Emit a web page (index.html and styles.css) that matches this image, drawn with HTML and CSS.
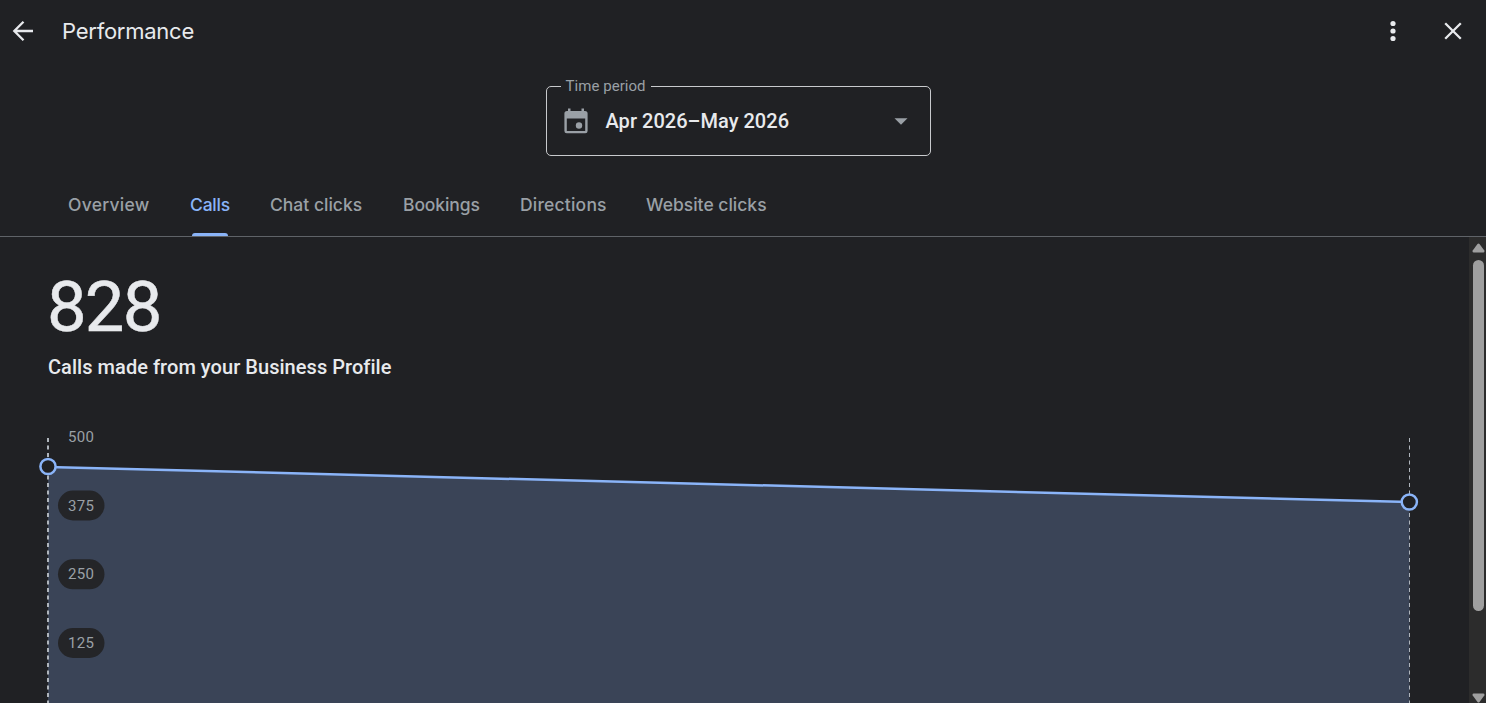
FILE: index.html
```html
<!DOCTYPE html>
<html lang="en">
<head>
    <meta charset="utf-8">
    <title>Performance</title>
    <link rel="stylesheet" href="styles.css">
</head>
<body>
<div class="performance">
    <header class="header">
        <svg class="icon-back" width="22" height="22" viewBox="0 0 22 22">
            <path d="M21 11H2.5M11.5 1.8L2.3 11L11.5 20.2"/>
        </svg>
        <h1 class="title">Performance</h1>
        <svg class="icon-more" width="6" height="22" viewBox="0 0 6 22">
            <circle cx="3" cy="3.5" r="2.6"/>
            <circle cx="3" cy="11" r="2.6"/>
            <circle cx="3" cy="18.5" r="2.6"/>
        </svg>
        <svg class="icon-close" width="18" height="18" viewBox="0 0 18 18">
            <path d="M1.2 1.2L16.8 16.8M16.8 1.2L1.2 16.8"/>
        </svg>
    </header>

    <fieldset class="period">
        <legend class="period-label">Time period</legend>
        <div class="period-value">
            <svg class="icon-calendar" width="24" height="26" viewBox="0 0 24 26">
                <path fill-rule="evenodd" d="M4 0.500h2.500v2.500h11V0.500H20v2.500h1a2.600 2.600 0 0 1 2.600 2.600v17.300a2.300 2.300 0 0 1-2.300 2.300H2.700a2.300 2.300 0 0 1-2.300-2.300V5.600A2.600 2.600 0 0 1 3 3h1zM2.800 10.500v12.500h18.400V10.500z"/>
                <circle cx="15" cy="17.500" r="3.200"/>
            </svg>
            <span class="period-text">Apr 2026–May 2026</span>
            <svg class="icon-arrow" width="14" height="7" viewBox="0 0 14 7">
                <path d="M0.500 0.200h13L7 6.700z"/>
            </svg>
        </div>
    </fieldset>

    <nav class="tabs">
        <div class="tab tab-overview">Overview</div>
        <div class="tab tab-calls active">Calls</div>
        <div class="tab tab-chat">Chat clicks</div>
        <div class="tab tab-bookings">Bookings</div>
        <div class="tab tab-directions">Directions</div>
        <div class="tab tab-website">Website clicks</div>
    </nav>

    <div class="body">
        <main class="content">
            <div class="total">828</div>
            <div class="subtitle">Calls made from your Business Profile</div>
            <svg class="chart" width="1469" height="278" viewBox="0 425 1469 278">
                <path class="area" d="M48 467L1409.500 502V703H48z"/>
                <path class="guide guide-start" d="M48 438V703"/>
                <path class="guide" d="M1409.500 438V703"/>
                <path class="line" d="M48 467L1409.500 502"/>
                <circle class="point" cx="48" cy="466.500" r="7.600"/>
                <circle class="point" cx="1409.300" cy="502" r="7.600"/>
                <rect class="pill" x="58" y="490.500" width="46.500" height="30" rx="15"/>
                <rect class="pill" x="58" y="559.300" width="46.500" height="30" rx="15"/>
                <rect class="pill" x="58" y="628" width="46.500" height="30" rx="15"/>
                <text class="tick" x="68" y="442">500</text>
                <text class="tick" x="68" y="511">375</text>
                <text class="tick" x="68" y="579">250</text>
                <text class="tick" x="68" y="648">125</text>
            </svg>
        </main>
        <div class="scrollbar">
            <svg width="13" height="10" viewBox="0.500 0 13 10"><path d="M6 1Q7 0 8 1L12.800 7.500Q13.500 9.500 12 9.500H2Q0.500 9.500 1.200 7.500z"/></svg>
            <div class="thumb"></div>
            <svg class="scroll-down" width="13" height="10" viewBox="0.500 0 13 10"><path d="M6 9Q7 10 8 9L12.800 2.500Q13.500 0.500 12 0.500H2Q0.500 0.500 1.200 2.500z"/></svg>
        </div>
    </div>
</div>
</body>
</html>
```
FILE: styles.css
```css
* {
    box-sizing: border-box;
}

body {
    margin: 0;
    background-color: #202124;
    color: #e8eaed;
    font-family: Roboto, sans-serif;
    overflow: hidden;
}

.performance {
    display: flex;
    flex-direction: column;
    height: 703px;
}

.header {
    display: flex;
    align-items: center;
    height: 62px;
    padding: 0 24px 0 12px;
}

.icon-back, .icon-close {
    fill: none;
    stroke: #e8eaed;
    stroke-width: 2.3;
}

.icon-more {
    fill: #e8eaed;
    margin-left: auto;
    margin-right: 48px;
}

.title {
    margin: 0 0 0 28px;
    font-family: Inter, sans-serif;
    font-size: 22px;
    font-weight: 400;
    line-height: 28px;
    letter-spacing: -0.25px;
}

.period {
    width: 385px;
    height: 78px;
    margin: 16px 0 0 546px;
    padding: 0 22px 0 17px;
    border: 1px solid #c8cacd;
    border-radius: 5px;
}

.period-label {
    margin-left: -3px;
    padding: 0 5px 0 4.5px;
    color: #9aa0a6;
    font-size: 15px;
    line-height: 16px;
    letter-spacing: 0.05px;
}

.period-value {
    display: flex;
    align-items: center;
    height: 54px;
}

.icon-calendar, .icon-arrow {
    fill: #9aa0a6;
}

.period-text {
    margin-left: 17.5px;
    font-size: 20px;
    font-weight: 500;
    letter-spacing: 0.03px;
}

.icon-arrow {
    margin-left: auto;
}

.tabs {
    display: flex;
    gap: 40px;
    height: 81px;
    padding-left: 68px;
    border-bottom: 1px solid #5f6368;
}

.tab {
    position: relative;
    padding-top: 37px;
    color: #9aa0a6;
    font-family: Inter, sans-serif;
    font-size: 17.5px;
    font-weight: 500;
    line-height: 24px;
    white-space: nowrap;
}

.tab-overview {
    width: 82px;
    letter-spacing: 0.25px;
}

.tab-calls {
    width: 40px;
    letter-spacing: -0.2px;
}

.tab-chat {
    width: 93px;
}

.tab-bookings {
    width: 77px;
    letter-spacing: -0.1px;
}

.tab-directions {
    width: 86px;
    letter-spacing: 0.2px;
}

.tab.active {
    color: #8ab4f8;
}

.tab.active::after {
    content: "";
    position: absolute;
    left: 2px;
    right: 2px;
    bottom: 0;
    height: 3px;
    border-radius: 3px 3px 0 0;
    background-color: #8ab4f8;
}

.body {
    display: flex;
    flex: 1;
    min-height: 0;
}

.content {
    flex: 1;
    overflow: hidden;
}

.total {
    margin: 34px 0 0 47px;
    font-size: 70.5px;
    line-height: 72px;
    letter-spacing: -1.8px;
    -webkit-text-stroke: 0.5px #e8eaed;
}

.subtitle {
    margin: 12px 0 0 48px;
    font-size: 20px;
    font-weight: 500;
    line-height: 24px;
    letter-spacing: 0.05px;
}

.chart {
    display: block;
    margin-top: 46px;
}

.area {
    fill: #3a4457;
}

.guide {
    fill: none;
    stroke: #aeb4bb;
    stroke-width: 1;
    stroke-dasharray: 4 3.5;
}

.guide-start {
    stroke-width: 2;
}

.line {
    stroke: #8ab4f8;
    stroke-width: 2.5;
}

.point {
    fill: #202124;
    stroke: #8ab4f8;
    stroke-width: 2.5;
}

.pill {
    fill: #242528;
}

.tick {
    fill: #9aa0a6;
    font-size: 15px;
    letter-spacing: 0.3px;
}

.scrollbar {
    display: flex;
    flex-direction: column;
    align-items: center;
    width: 17px;
    padding: 6px 0 0 2px;
    background-color: #2c2c2c;
}

.scrollbar svg {
    fill: #9f9f9f;
}

.thumb {
    width: 11px;
    height: 351px;
    margin-top: 7px;
    border-radius: 6px;
    background-color: #9f9f9f;
}

.scroll-down {
    margin-top: auto;
}
```
